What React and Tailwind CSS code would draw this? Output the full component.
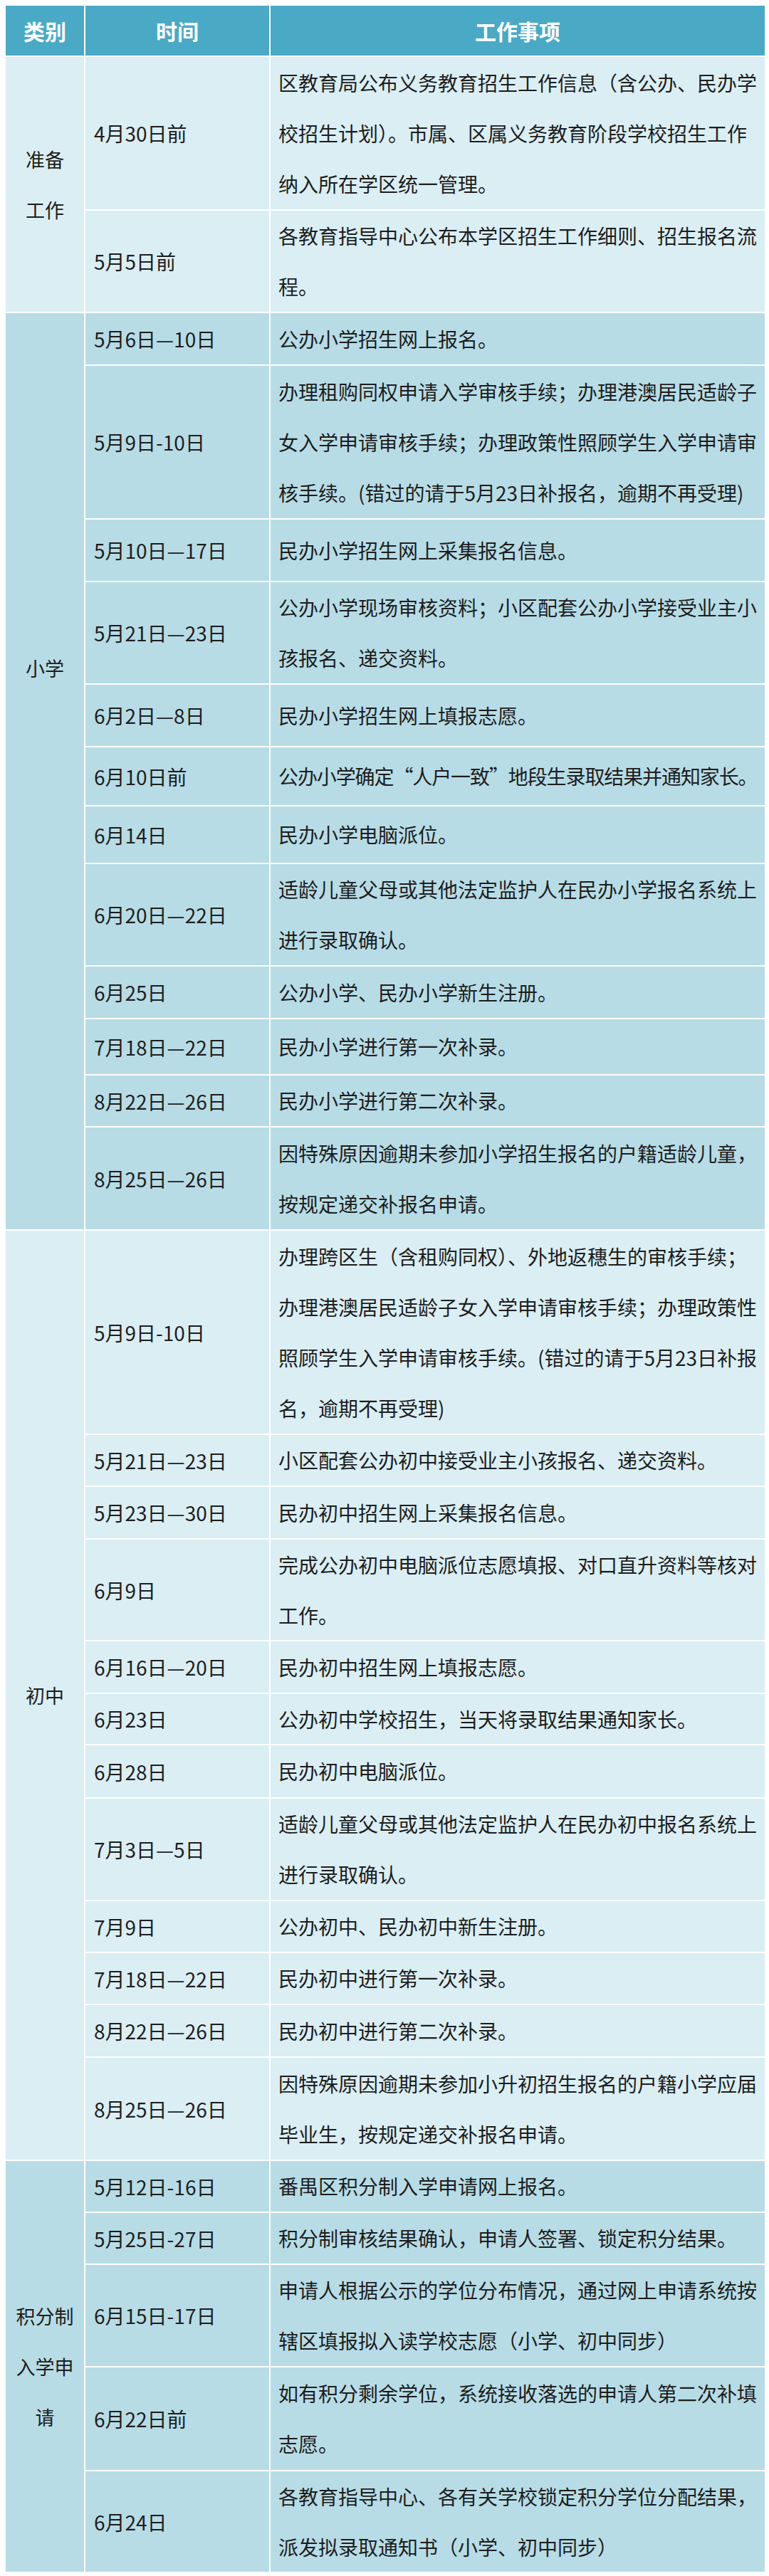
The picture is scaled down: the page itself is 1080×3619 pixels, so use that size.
import React from 'react';

// 义务教育招生工作时间表
const sections = [
  {
    label: ['准备', '工作'],
    tone: 'bg-[#daeef4]',
    labelPos: 'items-center',
    rows: [
      {
        h: 'h-[214px]',
        time: '4月30日前',
        lines: [
          '区教育局公布义务教育招生工作信息（含公办、民办学',
          '校招生计划）。市属、区属义务教育阶段学校招生工作',
          '纳入所在学区统一管理。',
        ],
      },
      {
        h: 'h-[142px]',
        time: '5月5日前',
        lines: ['各教育指导中心公布本学区招生工作细则、招生报名流', '程。'],
      },
    ],
  },
  {
    label: ['小学'],
    tone: 'bg-[#b7dce6]',
    labelPos: 'items-start pt-[463px]',
    rows: [
      { h: 'h-[72px]', time: '5月6日—10日', lines: ['公办小学招生网上报名。'] },
      {
        h: 'h-[214px]',
        time: '5月9日-10日',
        lines: [
          '办理租购同权申请入学审核手续；办理港澳居民适龄子',
          '女入学申请审核手续；办理政策性照顾学生入学申请审',
          '核手续。(错过的请于5月23日补报名，逾期不再受理)',
        ],
      },
      { h: 'h-[86px]', time: '5月10日—17日', lines: ['民办小学招生网上采集报名信息。'] },
      {
        h: 'h-[142px]',
        time: '5月21日—23日',
        lines: ['公办小学现场审核资料；小区配套公办小学接受业主小', '孩报名、递交资料。'],
      },
      { h: 'h-[86px]', time: '6月2日—8日', lines: ['民办小学招生网上填报志愿。'] },
      {
        h: 'h-[81px]',
        time: '6月10日前',
        lines: ['公办小学确定“人户一致”地段生录取结果并通知家长。'],
        tight: true,
      },
      { h: 'h-[79px]', time: '6月14日', lines: ['民办小学电脑派位。'] },
      {
        h: 'h-[142px]',
        time: '6月20日—22日',
        lines: ['适龄儿童父母或其他法定监护人在民办小学报名系统上', '进行录取确认。'],
      },
      { h: 'h-[72px]', time: '6月25日', lines: ['公办小学、民办小学新生注册。'] },
      { h: 'h-[77px]', time: '7月18日—22日', lines: ['民办小学进行第一次补录。'] },
      { h: 'h-[71px]', time: '8月22日—26日', lines: ['民办小学进行第二次补录。'] },
      {
        h: 'h-[143px]',
        time: '8月25日—26日',
        lines: ['因特殊原因逾期未参加小学招生报名的户籍适龄儿童，', '按规定递交补报名申请。'],
      },
    ],
  },
  {
    label: ['初中'],
    tone: 'bg-[#daeef4]',
    labelPos: 'items-center',
    rows: [
      {
        h: 'h-[285px]',
        time: '5月9日-10日',
        lines: [
          '办理跨区生（含租购同权）、外地返穗生的审核手续；',
          '办理港澳居民适龄子女入学申请审核手续；办理政策性',
          '照顾学生入学申请审核手续。(错过的请于5月23日补报',
          '名，逾期不再受理)',
        ],
      },
      { h: 'h-[71px]', time: '5月21日—23日', lines: ['小区配套公办初中接受业主小孩报名、递交资料。'] },
      { h: 'h-[72px]', time: '5月23日—30日', lines: ['民办初中招生网上采集报名信息。'] },
      {
        h: 'h-[141px]',
        time: '6月9日',
        lines: ['完成公办初中电脑派位志愿填报、对口直升资料等核对', '工作。'],
      },
      { h: 'h-[72px]', time: '6月16日—20日', lines: ['民办初中招生网上填报志愿。'] },
      { h: 'h-[70px]', time: '6月23日', lines: ['公办初中学校招生，当天将录取结果通知家长。'] },
      { h: 'h-[73px]', time: '6月28日', lines: ['民办初中电脑派位。'] },
      {
        h: 'h-[142px]',
        time: '7月3日—5日',
        lines: ['适龄儿童父母或其他法定监护人在民办初中报名系统上', '进行录取确认。'],
      },
      { h: 'h-[71px]', time: '7月9日', lines: ['公办初中、民办初中新生注册。'] },
      { h: 'h-[71px]', time: '7月18日—22日', lines: ['民办初中进行第一次补录。'] },
      { h: 'h-[72px]', time: '8月22日—26日', lines: ['民办初中进行第二次补录。'] },
      {
        h: 'h-[143px]',
        time: '8月25日—26日',
        lines: ['因特殊原因逾期未参加小升初招生报名的户籍小学应届', '毕业生，按规定递交补报名申请。'],
      },
    ],
  },
  {
    label: ['积分制', '入学申', '请'],
    tone: 'bg-[#b7dce6]',
    labelPos: 'items-center',
    rows: [
      { h: 'h-[71px]', time: '5月12日-16日', lines: ['番禺区积分制入学申请网上报名。'] },
      { h: 'h-[71px]', time: '5月25日-27日', lines: ['积分制审核结果确认，申请人签署、锁定积分结果。'] },
      {
        h: 'h-[142px]',
        time: '6月15日-17日',
        lines: ['申请人根据公示的学位分布情况，通过网上申请系统按', '辖区填报拟入读学校志愿（小学、初中同步）'],
      },
      {
        h: 'h-[144px]',
        time: '6月22日前',
        lines: ['如有积分剩余学位，系统接收落选的申请人第二次补填', '志愿。'],
      },
      {
        h: 'h-[141px]',
        time: '6月24日',
        lines: ['各教育指导中心、各有关学校锁定积分学位分配结果，', '派发拟录取通知书（小学、初中同步）'],
      },
    ],
  },
];

function Row({ row, tone }) {
  return (
    <div className={`flex gap-[2px] ${row.h}`}>
      <div className={`w-[258px] shrink-0 flex items-center pl-[12px] ${tone}`}>
        <span className="whitespace-nowrap">{row.time}</span>
      </div>
      <div className={`flex-1 flex items-center pl-[11px] overflow-hidden ${tone}`}>
        <div className={`leading-[71px] ${row.tight ? 'tracking-[-1.1px]' : ''}`}>
          {row.lines.map((l, i) => (
            <div key={i} className="whitespace-nowrap">{l}</div>
          ))}
        </div>
      </div>
    </div>
  );
}

export default function App() {
  return (
    <div className="bg-white pt-[8px] pl-[8px] pr-[6px] pb-[5px] font-['Noto_Sans_CJK_SC','Noto_Sans',sans-serif] text-[28px] text-[#1d1d1d]">
      <div className="flex flex-col gap-[2px] bg-white">
        {/* 表头 */}
        <div className="flex gap-[2px] h-[70px] text-white font-bold text-[30px]">
          <div className="w-[110px] shrink-0 flex items-center justify-center bg-[#4aa9c5]">类别</div>
          <div className="w-[258px] shrink-0 flex items-center justify-center bg-[#4aa9c5]">时间</div>
          <div className="flex-1 flex items-center justify-center bg-[#4aa9c5]">工作事项</div>
        </div>

        {sections.map((sec, si) => (
          <div key={si} className="flex gap-[2px]">
            <div className={`w-[110px] shrink-0 flex justify-center ${sec.labelPos} ${sec.tone}`}>
              <div className="text-center leading-[71px] text-[27px]">
                {sec.label.map((t, i) => (
                  <div key={i}>{t}</div>
                ))}
              </div>
            </div>
            <div className="flex-1 flex flex-col gap-[2px]">
              {sec.rows.map((row, ri) => (
                <Row key={ri} row={row} tone={sec.tone} />
              ))}
            </div>
          </div>
        ))}
      </div>
    </div>
  );
}
